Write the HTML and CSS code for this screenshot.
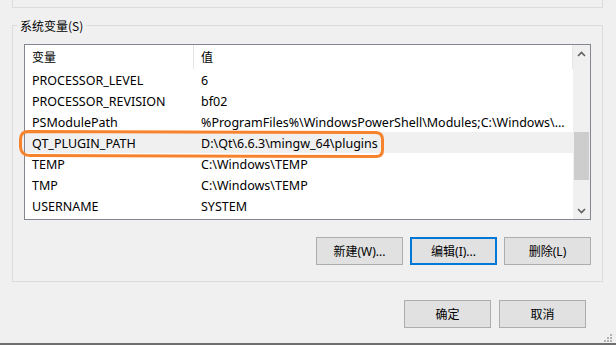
FILE: index.html
```html
<!DOCTYPE html>
<html lang="zh-CN">
<head>
    <meta charset="UTF-8">
    <title>环境变量</title>
    <link rel="stylesheet" href="styles.css">
</head>
<body>
    <div class="window">
        <div class="user-group"></div>

        <fieldset class="group">
            <legend>系统变量(S)</legend>
            <div class="listbox">
                <div class="list-main">
                    <div class="list-head">
                        <div class="col-name">变量</div>
                        <div class="col-value">值</div>
                    </div>
                    <div class="row"><div class="col-name">PROCESSOR_LEVEL</div><div class="col-value">6</div></div>
                    <div class="row"><div class="col-name">PROCESSOR_REVISION</div><div class="col-value">bf02</div></div>
                    <div class="row"><div class="col-name">PSModulePath</div><div class="col-value">%ProgramFiles%\WindowsPowerShell\Modules;C:\Windows\...</div></div>
                    <div class="row selected"><div class="col-name">QT_PLUGIN_PATH</div><div class="col-value">D:\Qt\6.6.3\mingw_64\plugins</div></div>
                    <div class="row"><div class="col-name">TEMP</div><div class="col-value">C:\Windows\TEMP</div></div>
                    <div class="row"><div class="col-name">TMP</div><div class="col-value">C:\Windows\TEMP</div></div>
                    <div class="row"><div class="col-name">USERNAME</div><div class="col-value">SYSTEM</div></div>
                </div>
                <div class="scrollbar">
                    <div class="arrow">
                        <svg width="9" height="6" viewBox="0 0 9 6"><polyline points="1,5 4.5,1.5 8,5" fill="none" stroke="#606060" stroke-width="1.6"/></svg>
                    </div>
                    <div class="track">
                        <div class="thumb"></div>
                    </div>
                    <div class="arrow">
                        <svg width="9" height="6" viewBox="0 0 9 6"><polyline points="1,1 4.5,4.5 8,1" fill="none" stroke="#606060" stroke-width="1.6"/></svg>
                    </div>
                </div>
            </div>
            <div class="actions group-actions">
                <button class="button">新建(W)...</button>
                <button class="button focused">编辑(I)...</button>
                <button class="button">删除(L)</button>
            </div>
        </fieldset>

        <div class="actions dialog-actions">
            <button class="button">确定</button>
            <button class="button">取消</button>
        </div>

        <!-- hand drawn highlight around the selected row -->
        <svg class="marker" width="616" height="345" viewBox="0 0 616 345">
            <path d="M28 131.5 L376 132.5 Q382.5 133 382.5 139.5 L382.5 150 Q382.5 156.5 376 156.5 L30 155.5 Q21 155.5 20.5 147 L20.5 139 Q21 131.5 28 131.5 Z" fill="none" stroke="#f7842c" stroke-width="3"/>
        </svg>

        <svg class="grip" width="8" height="8" viewBox="0 0 8 8">
            <rect x="6" y="0" width="2" height="2" fill="#b4b4b4"/>
            <rect x="3" y="3" width="2" height="2" fill="#b4b4b4"/>
            <rect x="6" y="3" width="2" height="2" fill="#b4b4b4"/>
            <rect x="0" y="6" width="2" height="2" fill="#b4b4b4"/>
            <rect x="3" y="6" width="2" height="2" fill="#b4b4b4"/>
            <rect x="6" y="6" width="2" height="2" fill="#b4b4b4"/>
        </svg>
    </div>
</body>
</html>
```

FILE: styles.css
```css
body {
    margin: 0;
    background: #f0f0f0;
    font-family: "Segoe UI", "Noto Sans", "Noto Sans CJK SC", sans-serif;
    font-size: 12.5px;
    color: #000;
}
.window {
    position: relative;
    height: 343px;
    border-bottom: 2px solid #6e6e6e;
    overflow: hidden;
}
.user-group {
    height: 7px;
    margin: 0 13px 0 12px;
    border: 1px solid #dcdcdc;
    border-top: none;
}
.group {
    margin: 10px 13px 0 12px;
    padding: 11px 11px 16px 11px;
    border: 1px solid #dcdcdc;
    min-width: 0;
}
.group legend {
    font-family: "Noto Sans CJK SC", sans-serif;
    font-size: 12px;
    line-height: 15px;
    padding: 0 3px;
    margin-left: -7px;
}
.listbox {
    display: flex;
    height: 174px;
    border: 1px solid #828790;
    background: white;
}
.list-main {
    flex: 1;
    min-width: 0;
}
.list-head {
    display: flex;
    height: 24px;
    line-height: 24px;
    font-family: "Noto Sans CJK SC", sans-serif;
    font-size: 12px;
    border-right: 1px solid #e5e5e5;
}
.list-head .col-name {
    border-right: 1px solid #e5e5e5;
}
.row {
    display: flex;
    height: 21px;
    line-height: 23px;
    white-space: nowrap;
}
.row.selected {
    background: #f0f0f0;
}
.col-name {
    width: 161px;
    padding-left: 7px;
    flex-shrink: 0;
}
.col-value {
    padding-left: 7px;
    overflow: hidden;
}
.row .col-name {
    width: 161px;
    padding-right: 1px;
}
.scrollbar {
    width: 17px;
    background: #f0f0f0;
    display: flex;
    flex-direction: column;
}
.arrow {
    height: 17px;
    display: flex;
    align-items: center;
    justify-content: center;
}
.track {
    flex: 1;
    padding-top: 70px;
}
.thumb {
    height: 48px;
    margin: 0 1px;
    background: #cdcdcd;
}
.actions {
    display: flex;
    justify-content: flex-end;
}
.group-actions {
    gap: 7px;
    margin-top: 17px;
}
.dialog-actions {
    gap: 8px;
    margin-top: 18px;
    padding-right: 30px;
}
.button {
    box-sizing: border-box;
    width: 87px;
    height: 28px;
    padding: 0;
    background: #e1e1e1;
    border: 1px solid #adadad;
    font-family: "Segoe UI", "Noto Sans", "Noto Sans CJK SC", sans-serif;
    font-size: 12px;
    color: #000;
}
.button.focused {
    border: 2px solid #0078d7;
}
.marker {
    position: absolute;
    left: 0;
    top: 0;
    pointer-events: none;
}
.grip {
    position: absolute;
    left: 604px;
    top: 334px;
}
```
